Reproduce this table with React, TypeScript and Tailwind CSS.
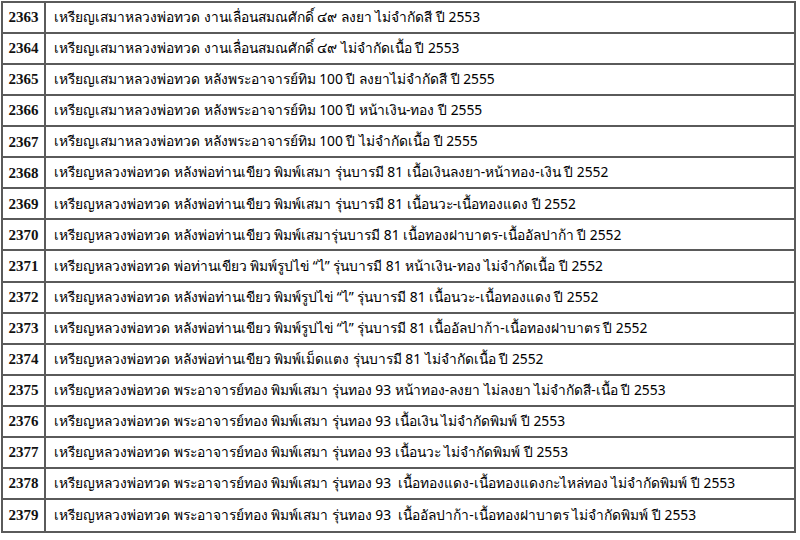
const rows: [string, string][] = [
  ['2363', 'เหรียญเสมาหลวงพ่อทวด งานเลื่อนสมณศักดิ์ ๔๙ ลงยา ไม่จำกัดสี ปี 2553'],
  ['2364', 'เหรียญเสมาหลวงพ่อทวด งานเลื่อนสมณศักดิ์ ๔๙ ไม่จำกัดเนื้อ ปี 2553'],
  ['2365', 'เหรียญเสมาหลวงพ่อทวด หลังพระอาจารย์ทิม 100 ปี ลงยาไม่จำกัดสี ปี 2555'],
  ['2366', 'เหรียญเสมาหลวงพ่อทวด หลังพระอาจารย์ทิม 100 ปี หน้าเงิน-ทอง ปี 2555'],
  ['2367', 'เหรียญเสมาหลวงพ่อทวด หลังพระอาจารย์ทิม 100 ปี ไม่จำกัดเนื้อ ปี 2555'],
  ['2368', 'เหรียญหลวงพ่อทวด หลังพ่อท่านเขียว พิมพ์เสมา รุ่นบารมี 81 เนื้อเงินลงยา-หน้าทอง-เงิน ปี 2552'],
  ['2369', 'เหรียญหลวงพ่อทวด หลังพ่อท่านเขียว พิมพ์เสมา รุ่นบารมี 81 เนื้อนวะ-เนื้อทองแดง ปี 2552'],
  ['2370', 'เหรียญหลวงพ่อทวด หลังพ่อท่านเขียว พิมพ์เสมารุ่นบารมี 81 เนื้อทองฝาบาตร-เนื้ออัลปาก้า ปี 2552'],
  ['2371', 'เหรียญหลวงพ่อทวด พ่อท่านเขียว พิมพ์รูปไข่ “ไ” รุ่นบารมี 81 หน้าเงิน-ทอง ไม่จำกัดเนื้อ ปี 2552'],
  ['2372', 'เหรียญหลวงพ่อทวด หลังพ่อท่านเขียว พิมพ์รูปไข่ “ไ” รุ่นบารมี 81 เนื้อนวะ-เนื้อทองแดง ปี 2552'],
  ['2373', 'เหรียญหลวงพ่อทวด หลังพ่อท่านเขียว พิมพ์รูปไข่ “ไ” รุ่นบารมี 81 เนื้ออัลปาก้า-เนื้อทองฝาบาตร ปี 2552'],
  ['2374', 'เหรียญหลวงพ่อทวด หลังพ่อท่านเขียว พิมพ์เม็ดแตง รุ่นบารมี 81 ไม่จำกัดเนื้อ ปี 2552'],
  ['2375', 'เหรียญหลวงพ่อทวด พระอาจารย์ทอง พิมพ์เสมา รุ่นทอง 93 หน้าทอง-ลงยา ไม่ลงยา ไม่จำกัดสี-เนื้อ ปี 2553'],
  ['2376', 'เหรียญหลวงพ่อทวด พระอาจารย์ทอง พิมพ์เสมา รุ่นทอง 93 เนื้อเงิน ไม่จำกัดพิมพ์ ปี 2553'],
  ['2377', 'เหรียญหลวงพ่อทวด พระอาจารย์ทอง พิมพ์เสมา รุ่นทอง 93 เนื้อนวะ ไม่จำกัดพิมพ์ ปี 2553'],
  ['2378', 'เหรียญหลวงพ่อทวด พระอาจารย์ทอง พิมพ์เสมา รุ่นทอง 93  เนื้อทองแดง-เนื้อทองแดงกะไหล่ทอง ไม่จำกัดพิมพ์ ปี 2553'],
  ['2379', 'เหรียญหลวงพ่อทวด พระอาจารย์ทอง พิมพ์เสมา รุ่นทอง 93  เนื้ออัลปาก้า-เนื้อทองฝาบาตร ไม่จำกัดพิมพ์ ปี 2553'],
];

export default function App() {
  return (
    <div className="w-[800px] h-[540px] bg-white pt-px pl-px">
      <div className="w-[795px] h-[532px] border-2 border-[#5a5a5a] grid grid-rows-17">
        {rows.map(([num, text], i) => (
          <div
            key={num}
            className={`grid grid-cols-[43px_1fr] ${i < rows.length - 1 ? 'border-b-2 border-[#5a5a5a]' : ''}`}
          >
            <div className="border-r-2 border-[#5a5a5a] flex items-center justify-center font-['Liberation_Serif',serif] font-bold text-[15px] text-[#111]">
              {num}
            </div>
            <div className="flex items-center pl-2 whitespace-pre font-['Noto_Sans',sans-serif] text-[13.8px] text-black">
              {text}
            </div>
          </div>
        ))}
      </div>
    </div>
  );
}
